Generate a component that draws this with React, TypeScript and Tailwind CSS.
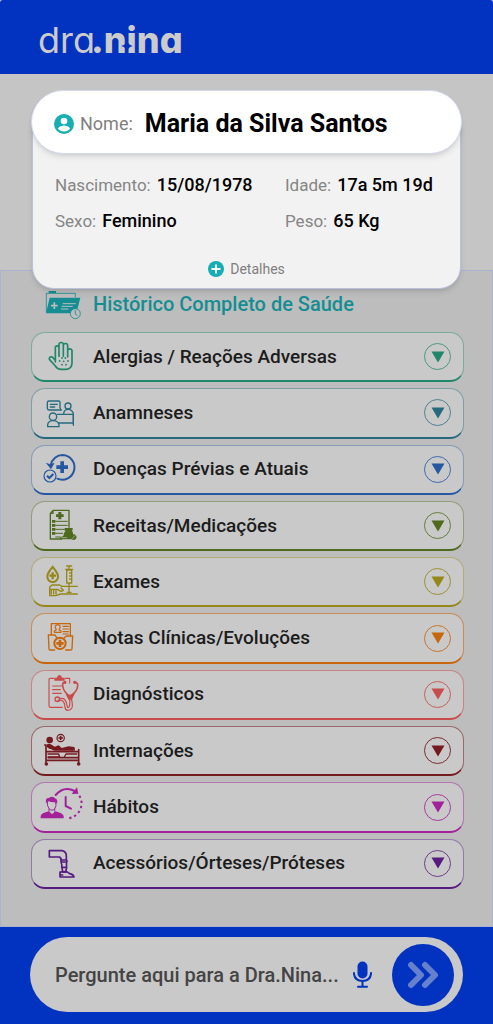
import type { ReactNode } from "react";

type Row = {
  title: string;
  box: string;
  line: string;
  ring: string;
  tone: string;
  icon: ReactNode;
};

const rows: Row[] = [
  {
    title: "Alergias / Reações Adversas",
    box: "60 156 144 144",
    line: "border-[#20876b]/45 border-b-[#20876b]",
    ring: "border-[#20876b]/75",
    tone: "text-[#20876b]",
    icon: (
      <>
        <path d="M106 243V200a5.500 5.500 0 0 1 11 0V226M117 226V191a6 6 0 0 1 13 0V226M130 226V194a6 6 0 0 1 13 0V228M143 228V208a7 7 0 0 1 13 0V246Q156 265 136 265H124Q112 265 106 255L88 235Q87 226 97 228L106 238" />
        <g fill="currentColor" stroke="none">
          <circle cx="126" cy="231" r="2.700" />
          <circle cx="136" cy="231" r="2.700" />
          <circle cx="119" cy="240" r="2.700" />
          <circle cx="131" cy="241" r="2.700" />
          <circle cx="144" cy="240" r="2.700" />
          <circle cx="126" cy="251" r="2.700" />
          <circle cx="138" cy="251" r="2.700" />
        </g>
      </>
    ),
  },
  {
    title: "Anamneses",
    box: "60 325 144 144",
    line: "border-[#276a80]/45 border-b-[#276a80]",
    ring: "border-[#276a80]/75",
    tone: "text-[#276a80]",
    icon: (
      <g strokeWidth="4">
        <path d="M87 361H116Q120 361 120 365V382L124 388H87Q82 388 82 383V366Q82 361 87 361ZM91 371H112M91 379H104" />
        <circle cx="144" cy="376" r="9" />
        <path d="M131 398Q133 386 144 386Q157 386 160 399V434" />
        <circle cx="99" cy="408" r="11" />
        <path d="M83 438V432Q85 420 99 420Q114 420 117 432V438ZM83 438H117M112 401H160V427H116" />
      </g>
    ),
  },
  {
    title: "Doenças Prévias e Atuais",
    box: "60 16 144 144",
    line: "border-[#2558a0]/40 border-b-[#2558a0]",
    ring: "border-[#1549a8]/75",
    tone: "text-[#2558a0]",
    icon: (
      <>
        <path strokeWidth="6" d="M92 77C96 57 111 46 128 46A37 37 0 1 1 112 117" />
        <path fill="currentColor" stroke="none" d="M77 69L91 74L104 69L93 89ZM121 65H132V77H144V88H132V100H121V88H109V77H121Z" />
        <circle cx="90" cy="109" r="18" strokeWidth="3.500" />
        <path strokeWidth="6.500" strokeLinecap="butt" d="M81 108L88 115L100 103" />
      </>
    ),
  },
  {
    title: "Receitas/Medicações",
    box: "60 184 144 144",
    line: "border-[#4e6a1c]/45 border-b-[#4e6a1c]",
    ring: "border-[#4e6a1c]/80",
    tone: "text-[#4e6a1c]",
    icon: (
      <>
        <path strokeWidth="4" d="M99 209H147V260M125 295H91V218L99 209V218H91" />
        <path fill="currentColor" stroke="none" d="M115 214H124V221H131V229H124V236H115V229H108V221H115ZM96 238h10v8h-10zM96 250h10v8h-10zM96 262h10v8h-10zM96 274h10v8h-10zM134 262H158V269H155Q160 274 160 284V296H124Q119 296 120 290L130 286Q132 274 137 270H134Z" />
        <path strokeWidth="3" d="M107 242H142M107 254H142M107 266H133M107 278H128M107 289H120" />
        <circle cx="161" cy="289" r="6" fill="currentColor" />
        <path stroke="#c9c9c9" strokeWidth="2" d="M156 294L166 284M125 291H140" />
      </>
    ),
  },
  {
    title: "Exames",
    box: "60 23 144 144",
    line: "border-[#958718]/45 border-b-[#958718]",
    ring: "border-[#958718]/85",
    tone: "text-[#958718]",
    icon: (
      <g strokeWidth="4">
        <path strokeWidth="6" d="M98 49C93 58 82 66 82 79A16 16 0 0 0 114 79C114 66 103 58 98 49Z" />
        <path strokeWidth="7" strokeLinecap="butt" d="M98 66V87M88 76H108" />
        <path d="M140 47H155M147 47V57M137 57H158M140 59H155V98H140ZM147 98V123M142 126H153M149 68H155M149 77H155M149 86H155" />
        <path d="M172 108H126L119 104H96L89 110V136H107L122 131H172M94 117V131M101 118V131M108 119V131M91 117H112L123 123L130 120L123 113" />
      </g>
    ),
  },
  {
    title: "Notas Clínicas/Evoluções",
    box: "60 192 144 144",
    line: "border-[#c8660c]/60 border-b-[#c8660c]",
    ring: "border-[#c8660c]/85",
    tone: "text-[#c8660c]",
    icon: (
      <g strokeWidth="4">
        <path d="M94 252V221H151V256" />
        <path strokeWidth="3.500" d="M103 247V243L109 239L106 233V228Q113 220 120 228V234L117 239L123 243V247ZM129 229H145M129 237H145M129 245H145M129 252H145" />
        <path d="M104 300H90Q87 300 87 296L85 255H105L112 265M132 264L139 258H158L156 296Q156 300 151 300H137" />
        <circle cx="120" cy="280" r="17" strokeWidth="6" />
        <path strokeWidth="8" strokeLinecap="butt" d="M120 269V291M109 280H131" />
      </g>
    ),
  },
  {
    title: "Diagnósticos",
    box: "60 16 144 144",
    line: "border-[#c94b4b]/55 border-b-[#c94b4b]",
    ring: "border-[#c94b4b]/85",
    tone: "text-[#c94b4b]",
    icon: (
      <g strokeWidth="3.500">
        <path d="M101 41H90Q87 41 87 45V123Q87 128 92 128H127M136 41H149V55M98 64H124M98 75H121M98 86H124" />
        <path fill="currentColor" stroke="none" d="M103 48V39H111Q112 31 118 31Q125 31 126 39H134V48Z" />
        <path strokeWidth="5" d="M134 53Q127 53 128 64Q131 84 150 94Q171 83 173 64Q174 53 165 53M150 94L149 105" />
        <path strokeWidth="3.500" d="M154 101Q159 121 156 129Q152 137 144 137Q136 137 135 128Q134 109 124 107H113M149 103Q151 122 147 127Q141 131 141 122Q138 102 126 101H118" />
        <circle cx="112" cy="104" r="7" strokeWidth="4" />
        <path fill="currentColor" d="M139 88L150 94L162 87L155 103H146Z" />
        <circle cx="135" cy="53" r="3" fill="currentColor" />
        <circle cx="164" cy="53" r="3" fill="currentColor" />
      </g>
    ),
  },
  {
    title: "Internações",
    box: "60 186 144 144",
    line: "border-[#751b20]/55 border-b-[#751b20]",
    ring: "border-[#751b20]/90",
    tone: "text-[#751b20]",
    icon: (
      <>
        <circle cx="89" cy="225" r="10" fill="currentColor" stroke="none" />
        <circle cx="122" cy="219" r="11" strokeWidth="3.500" />
        <path strokeWidth="5" strokeLinecap="butt" d="M122 212V226M115 219H129" />
        <path fill="currentColor" stroke="none" d="M80 239Q86 233 96 240L104 245L116 241L125 249L146 244L163 246Q167 254 164 257H103L81 247Z" />
        <path strokeWidth="5" d="M78 240V295M74 240H78M99 249H88M78 260H176M176 254V295M85 278H172M78 286H176" />
        <path strokeWidth="4" d="M84 267H116L119 276H84M133 276L138 267H170" />
        <circle cx="79" cy="297" r="3" />
        <circle cx="176" cy="297" r="3" />
      </>
    ),
  },
  {
    title: "Hábitos",
    box: "60 24 144 144",
    line: "border-[#a3219a]/50 border-b-[#a3219a]",
    ring: "border-[#a3219a]/85",
    tone: "text-[#a3219a]",
    icon: (
      <>
        <path fill="currentColor" stroke="none" d="M62 130V123Q64 114 87 109L96 118L106 109Q128 114 131 123V130ZM78 85Q75 68 87 69Q97 61 107 71Q114 73 111 87L107 81Q96 83 87 79L82 81Z" />
        <path strokeWidth="3" d="M82 82Q80 92 87 100V108M107 82Q111 93 104 101V108M87 101Q96 111 105 101" />
        <path strokeWidth="6" d="M107 60Q132 31 164 48M137 66V93L153 101" />
        <path fill="currentColor" stroke="none" d="M171 37L175 56L155 57Z" />
        <path strokeWidth="6" strokeDasharray="7 9" strokeLinecap="butt" d="M178 62Q191 84 179 107Q167 128 139 131" />
      </>
    ),
  },
  {
    title: "Acessórios/Órteses/Próteses",
    box: "60 193 144 144",
    line: "border-[#561a80]/45 border-b-[#561a80]",
    ring: "border-[#561a80]/80",
    tone: "text-[#561a80]",
    icon: (
      <>
        <path d="M88 228H126Q139 230 139 244V256H125L119 247H88ZM123 251V262Q127 271 125 278H140Q138 268 141 258M126 262H139M126 278L128 292H137L140 278" />
        <path d="M120 292V307H162Q160 299 149 297L140 291ZM120 301H128" />
      </>
    ),
  },
];

function Logo() {
  return (
    <h1 className="relative flex items-baseline font-['Inter',sans-serif] text-[#cbcbcb]" style={{ fontFeatureSettings: '"cv11"' }}>
      <span className="text-[36px] leading-[44px] font-normal">dra</span>
      <span className="-ml-1 text-[36px] leading-[44px] font-extrabold">.nina</span>
      <svg viewBox="0 0 12 12" className="absolute top-[22px] left-[83px] size-3" aria-hidden="true">
        <path d="M6 0Q6.800 5.200 12 6Q6.800 6.800 6 12Q5.200 6.800 0 6Q5.200 5.200 6 0Z" fill="#0232c0" />
      </svg>
    </h1>
  );
}

function Field({ label, value }: { label: string; value: string }) {
  return (
    <div className="flex items-baseline gap-1.5">
      <dt className="text-[17px] text-[#858585]">{label}</dt>
      <dd className="text-[18px] font-medium text-black">{value}</dd>
    </div>
  );
}

function PatientCard() {
  return (
    <section className="relative z-10 -mb-[19px] px-[31px] pt-4">
      <div className="relative z-10 flex h-16 items-center rounded-full border border-[#d3d9ef] bg-white pt-[3px] pl-[22px] shadow-md">
        <svg viewBox="0 0 20 20" className="size-5 shrink-0" aria-hidden="true">
          <circle cx="10" cy="10" r="10" fill="#16adb5" />
          <circle cx="10" cy="7" r="3.300" fill="#fff" />
          <path d="M3.800 14.500Q6 11.500 10 11.500T16.200 14.500Q14 17.500 10 17.500T3.800 14.500Z" fill="#fff" />
        </svg>
        <span className="ml-1.5 text-[18px] text-[#7f7f7f]">Nome:</span>
        <strong className="ml-3 text-[25px] font-bold text-black">Maria da Silva Santos</strong>
      </div>
      <div className="mx-px -mt-8 rounded-b-[22px] border border-[#b9c1dd] bg-[#f2f2f2] pt-[50px] pb-[9px] shadow-md">
        <dl className="grid grid-cols-[230px_1fr] gap-y-3 pl-[22px] leading-6">
          <Field label="Nascimento:" value="15/08/1978" />
          <Field label="Idade:" value="17a 5m 19d" />
          <Field label="Sexo:" value="Feminino" />
          <Field label="Peso:" value="65 Kg" />
        </dl>
        <button type="button" className="mx-auto mt-[26px] flex items-center gap-1.5 text-[14px] leading-5 text-[#7f7f7f]">
          <svg viewBox="0 0 16 16" className="size-4" aria-hidden="true">
            <circle cx="8" cy="8" r="8" fill="#16adb5" />
            <path d="M8 3.500V12.500M3.500 8H12.500" stroke="#fff" strokeWidth="1.800" />
          </svg>
          Detalhes
        </button>
      </div>
    </section>
  );
}

function HistoryIcon() {
  return (
    <svg viewBox="75 18 108 96" className="h-8 w-9 text-[#148d93]" fill="none" stroke="currentColor" strokeWidth="2.500" aria-hidden="true">
      <path d="M79 90V34H166V46" />
      <path fill="currentColor" stroke="none" d="M86 33V27H108V33ZM89 47H181L169 94H78Z" />
      <path stroke="#bdbdbd" strokeWidth="5" d="M103 61V81M93 71H113" />
      <path stroke="#bdbdbd" strokeWidth="3" d="M128 65H167M125 73H158M123 81H145" />
      <circle cx="166" cy="95" r="15" fill="#bdbdbd" />
      <path d="M166 85V96L172 101" />
    </svg>
  );
}

export default function App() {
  return (
    <div className="flex min-h-screen flex-col bg-[#c5c5c5] font-['Roboto',sans-serif]">
      <header className="flex h-[74px] shrink-0 items-center rounded-t-[3px] bg-[#0232c0] pt-1.5 pl-[38px]">
        <Logo />
      </header>
      <main className="flex flex-1 flex-col">
        <PatientCard />
        <section className="flex flex-1 flex-col border border-[#a9b2ce] bg-[#bdbdbd] pr-7 pb-[37px] pl-[30px]">
          <h2 className="mt-3.5 flex h-[37px] items-center pl-3.5 text-[20px] font-medium text-[#148d93]">
            <HistoryIcon />
            <span className="ml-3">Histórico Completo de Saúde</span>
          </h2>
          <ul className="mt-2.5 flex flex-1 flex-col gap-1.5">
            {rows.map((row) => (
              <li key={row.title} className="flex flex-1">
                <button
                  type="button"
                  aria-expanded="false"
                  className={`flex flex-1 items-center rounded-[14px] border border-b-2 bg-[#c9c9c9] pr-3 pl-2 text-left ${row.line}`}
                >
                  <svg
                    viewBox={row.box}
                    className={`-my-1 size-12 shrink-0 ${row.tone}`}
                    fill="none"
                    stroke="currentColor"
                    strokeWidth="5"
                    strokeLinecap="round"
                    strokeLinejoin="round"
                    aria-hidden="true"
                  >
                    {row.icon}
                  </svg>
                  <span className="ml-[5px] flex-1 text-[19px] leading-6 font-medium text-[#1c1c1c]">{row.title}</span>
                  <span className={`flex size-[27px] items-center justify-center rounded-full border ${row.ring} ${row.tone}`}>
                    <svg viewBox="0 0 14 12" className="h-3 w-3.5" aria-hidden="true">
                      <path d="M0.500 0.500H13.500L7 11.500Z" fill="currentColor" />
                    </svg>
                  </span>
                </button>
              </li>
            ))}
          </ul>
        </section>
      </main>
      <footer className="shrink-0 bg-[#0232c0] px-[30px] pt-2.5 pb-3">
        <form className="flex h-[75px] items-center rounded-full bg-[#c9c9c9] pr-[9px] pl-[25px]" onSubmit={(e) => e.preventDefault()}>
          <input
            type="text"
            aria-label="Pergunte aqui para a Dra.Nina"
            placeholder="Pergunte aqui para a Dra.Nina..."
            className="min-w-0 flex-1 bg-transparent text-[20px] font-medium text-[#444] outline-none placeholder:text-[#444]"
          />
          <button type="button" aria-label="Falar" className="mr-5 text-[#0232c0]">
            <svg viewBox="0 0 19 27" className="h-[27px] w-[19px]" fill="none" stroke="currentColor" strokeWidth="2" strokeLinecap="round" aria-hidden="true">
              <rect x="4.500" y="0.500" width="10" height="17" rx="5" fill="currentColor" stroke="none" />
              <path d="M1 12V13Q2 20 9.500 20T18 13V12M9.500 20V25.500M5 25.800H14" />
            </svg>
          </button>
          <button type="submit" aria-label="Enviar" className="flex size-[62px] items-center justify-center rounded-full bg-[#0232c0] text-[#6780cb]">
            <svg viewBox="0 0 32 28" className="h-7 w-8" fill="none" stroke="currentColor" strokeWidth="6" strokeLinecap="round" strokeLinejoin="round" aria-hidden="true">
              <path d="M4 4L14 14L4 24M18 4L28 14L18 24" />
            </svg>
          </button>
        </form>
      </footer>
    </div>
  );
}
